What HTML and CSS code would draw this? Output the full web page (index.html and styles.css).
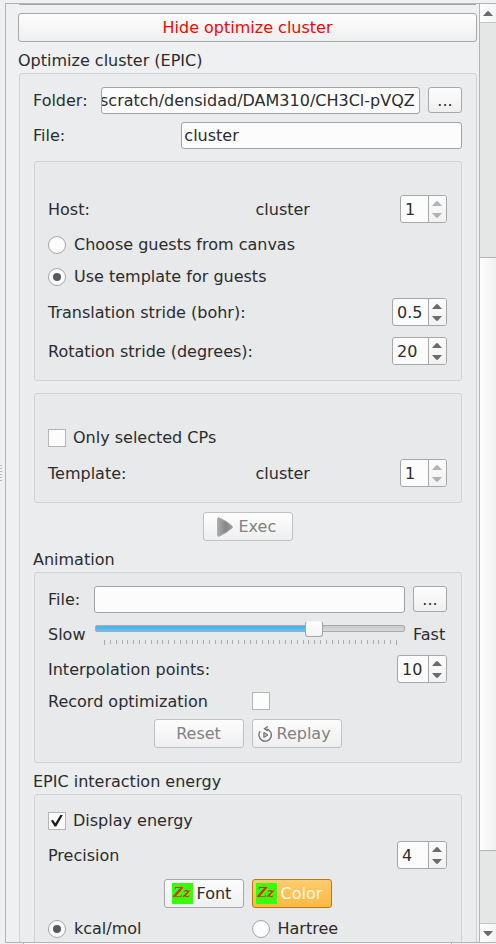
FILE: index.html
```html
<!DOCTYPE html>
<html lang="en">
<head>
<meta charset="utf-8">
<meta name="viewport" content="width=device-width, initial-scale=1">
<title>Optimize cluster</title>
<link rel="stylesheet" href="styles.css">
</head>
<body>
<svg class="defs" aria-hidden="true">
  <defs>
    <linearGradient id="play-fill" x1="0" y1="0" x2="1" y2="0">
      <stop offset="0" stop-color="#a9aba9"/>
      <stop offset="0.55" stop-color="#858785"/>
      <stop offset="1" stop-color="#9a9c9a"/>
    </linearGradient>
    <symbol id="up" viewBox="0 0 10 5"><path d="M0 5L4 .5Q5 -.3 6 .5L10 5Z" fill="currentColor"/></symbol>
    <symbol id="down" viewBox="0 0 10 5"><path d="M0 0L4 4.5Q5 5.3 6 4.5L10 0Z" fill="currentColor"/></symbol>
  </defs>
</svg>
<div class="window">
  <div class="splitter"></div>
  <div class="scroll-area">
    <main class="content">
      <div class="previous-edge"></div>
      <button class="button toggle" type="button">Hide optimize cluster</button>

      <h2 class="title">Optimize cluster (EPIC)</h2>
      <section class="group outer">
        <div class="folder-row">
          <label for="folder">Folder:</label>
          <input class="field scrolled" id="folder" type="text" value="scratch/densidad/DAM310/CH3Cl-pVQZ">
          <button class="button browse" type="button" aria-label="Browse folder">...</button>
        </div>
        <div class="name-row">
          <label for="name">File:</label>
          <input class="field" id="name" type="text" value="cluster">
        </div>

        <section class="group inner untitled">
          <div class="row pair">
            <label for="host">Host:</label>
            <div class="value"><span>cluster</span>
              <div class="spin disabled"><input class="one" id="host" type="text" value="1"><div class="steps"><button type="button" aria-label="Increase"><svg><use href="#up"/></svg></button><button type="button" aria-label="Decrease"><svg><use href="#down"/></svg></button></div></div>
            </div>
          </div>
          <label class="choice"><input type="radio" name="guests">Choose guests from canvas</label>
          <label class="choice"><input type="radio" name="guests" checked>Use template for guests</label>
          <div class="row">
            <label for="translation">Translation stride (bohr):</label>
            <div class="spin"><input class="three" id="translation" type="text" value="0.5"><div class="steps"><button type="button" aria-label="Increase"><svg><use href="#up"/></svg></button><button type="button" aria-label="Decrease"><svg><use href="#down"/></svg></button></div></div>
          </div>
          <div class="row">
            <label for="rotation">Rotation stride (degrees):</label>
            <div class="spin"><input class="three" id="rotation" type="text" value="20"><div class="steps"><button type="button" aria-label="Increase"><svg><use href="#up"/></svg></button><button type="button" aria-label="Decrease"><svg><use href="#down"/></svg></button></div></div>
          </div>
        </section>

        <section class="group inner untitled">
          <label class="choice"><input type="checkbox">Only selected CPs</label>
          <div class="row pair">
            <label for="template">Template:</label>
            <div class="value"><span>cluster</span>
              <div class="spin disabled"><input class="one" id="template" type="text" value="1"><div class="steps"><button type="button" aria-label="Increase"><svg><use href="#up"/></svg></button><button type="button" aria-label="Decrease"><svg><use href="#down"/></svg></button></div></div>
            </div>
          </div>
        </section>

        <button class="button wide exec" type="button" disabled>
          <svg class="play" viewBox="0 0 16 20"><path d="M.7 1.6Q.8 .5 2 .8Q10 4.2 15 9Q15.8 10 15 11Q10 15.800 2 19.2Q.8 19.500 .7 18.400Z" fill="url(#play-fill)" stroke="#a6a8a6"/></svg>
          Exec
        </button>

        <h3 class="title">Animation</h3>
        <section class="group inner animation">
          <div class="track-row">
            <label for="animation-file">File:</label>
            <input class="field" id="animation-file" type="text">
            <button class="button browse" type="button" aria-label="Browse file">...</button>
          </div>
          <div class="track-row slider-row">
            <label for="speed">Slow</label>
            <div class="slider">
              <input id="speed" type="range" min="0" max="50" value="36">
              <svg class="ticks" viewBox="0 0 293 5" preserveAspectRatio="none"><path d="M.5 0v5M6.5 0v4M12.5 0v4M18.5 0v4M23.5 0v4M29.5 0v4M35.5 0v4M41.5 0v4M47.5 0v4M53.5 0v4M58.5 0v4M64.5 0v4M70.5 0v4M76.5 0v4M82.5 0v4M88.5 0v4M93.5 0v4M99.5 0v4M105.5 0v4M111.5 0v4M117.5 0v4M123.5 0v4M128.5 0v4M134.5 0v4M140.5 0v4M146.5 0v4M152.5 0v4M158.5 0v4M164.5 0v4M169.5 0v4M175.5 0v4M181.5 0v4M187.5 0v4M193.5 0v4M199.5 0v4M204.5 0v4M210.5 0v4M216.5 0v4M222.5 0v4M228.5 0v4M234.5 0v4M239.5 0v4M245.5 0v4M251.5 0v4M257.5 0v4M263.5 0v4M269.5 0v4M274.5 0v4M280.5 0v4M286.5 0v4M292.5 0v5" stroke="#a9aaab"/></svg>
            </div>
            <span>Fast</span>
          </div>
          <div class="row">
            <label for="points">Interpolation points:</label>
            <div class="spin"><input class="two" id="points" type="text" value="10"><div class="steps"><button type="button" aria-label="Increase"><svg><use href="#up"/></svg></button><button type="button" aria-label="Decrease"><svg><use href="#down"/></svg></button></div></div>
          </div>
          <div class="row pair check-row">
            <label for="record">Record optimization</label>
            <input id="record" type="checkbox">
          </div>
          <div class="row pair buttons">
            <button class="button wide" type="button" disabled>Reset</button>
            <button class="button wide replay-button" type="button" disabled>
              <svg class="replay" viewBox="0 0 15 16"><path d="M2.200 5.200A6.200 6.200 0 1 0 8.500 2.900" fill="none" stroke="#6b6d6f" stroke-width="1.300"/><path d="M9.800 .5L6.500 2.800L9.800 5" fill="none" stroke="#6b6d6f" stroke-width="1.300"/><path d="M5.800 6.300L10 9L5.800 11.500Z" fill="#b5b7b8" stroke="#6b6d6f"/></svg>
              Replay
            </button>
          </div>
        </section>

        <h3 class="title">EPIC interaction energy</h3>
        <section class="group inner energy">
          <label class="choice"><input type="checkbox" checked>Display energy</label>
          <div class="row">
            <label for="precision">Precision</label>
            <div class="spin"><input class="two" id="precision" type="text" value="4"><div class="steps"><button type="button" aria-label="Increase"><svg><use href="#up"/></svg></button><button type="button" aria-label="Decrease"><svg><use href="#down"/></svg></button></div></div>
          </div>
          <div class="row pair buttons">
            <button class="button style" type="button"><span class="sample" aria-hidden="true">Zz</span>Font</button>
            <button class="button style active" type="button"><span class="sample" aria-hidden="true">Zz</span>Color</button>
          </div>
          <div class="row pair">
            <label class="choice"><input type="radio" name="unit" checked>kcal/mol</label>
            <label class="choice"><input type="radio" name="unit">Hartree</label>
          </div>
        </section>
      </section>
    </main>
    <div class="scrollbar">
      <button type="button" aria-label="Scroll up"><svg><use href="#up"/></svg></button>
      <div class="before"></div>
      <div class="thumb"></div>
      <div class="after"></div>
      <button type="button" aria-label="Scroll down"><svg><use href="#down"/></svg></button>
    </div>
  </div>
  <div class="next-pane"></div>
</div>
</body>
</html>
```

FILE: styles.css
```css
* { box-sizing: border-box; }

body {
  margin: 0;
  background: #eff0f1;
  color: #2a2c2e;
  font: 16px/19px "DejaVu Sans", sans-serif;
}

button, input { font: inherit; color: inherit; margin: 0; }
.defs { position: absolute; width: 0; height: 0; }

.window {
  display: grid;
  grid-template-columns: 5px minmax(0, 1fr);
  grid-template-rows: minmax(0, 1fr) 1px;
  height: 100vh;
  padding-top: 3px;
  overflow: hidden;
}

.splitter {
  align-self: center;
  justify-self: start;
  width: 2px;
  height: 16px;
  background: repeating-linear-gradient(#b9babb 0 1px, transparent 1px 3px);
}

.scroll-area {
  display: flex;
  min-height: 0;
  border: solid #b3b4b6;
  border-width: 1px 0 1px 1px;
}

.content {
  flex: 1;
  min-width: 0;
  overflow: hidden;
  padding: 0 2px 0 12px;
}

.next-pane {
  grid-column: 2;
  margin: 0 44px 0 18px;
  border: solid #b3b4b6;
  border-width: 0 1px;
  background: #f8f8f8;
}

.previous-edge { height: 1px; margin: 0 1px 8px; background: #a6a7a8; }

.title { margin: 9px 0 3px; font-size: 16px; font-weight: normal; }

.group {
  display: flex;
  flex-direction: column;
  margin-left: 1px;
  border: 1px solid #d0d2d3;
  border-radius: 3px;
}
.outer { padding: 13px 14px 13px 13px; background: #ebecee; }
.inner { padding: 13px 14px 14px 13px; background: #e8e9eb; }
.untitled { gap: 11px; margin-top: 12px; padding-top: 33px; padding-bottom: 15px; }
.animation { gap: 8px; }
.energy { gap: 10px; padding-top: 15px; }

.button {
  display: flex;
  align-items: center;
  justify-content: center;
  height: 29px;
  padding: 0;
  border: 1px solid #a6a7a8;
  border-radius: 3px;
  background: linear-gradient(#fdfdfd, #efefef);
}
.button:disabled { border-color: #c0c1c2; color: #808284; }
.toggle { width: 100%; color: #ff0000; }
.browse { width: 34px; height: 26px; }
.wide { width: 90px; gap: 6px; }
.exec { align-self: center; justify-content: flex-start; margin-top: 9px; padding-left: 13px; }
.play { width: 16px; height: 20px; }
.replay-button { justify-content: flex-start; gap: 4px; padding-left: 5px; }
.replay { width: 15px; height: 16px; }
.style { justify-content: flex-start; width: 80px; gap: 4px; padding-left: 7px; }
.active {
  padding-left: 3px;
  border-color: #b57a10;
  background: linear-gradient(#ffcc6e, #fbb941);
  color: #fff8e8;
}
.sample {
  width: 21px;
  height: 21px;
  background: #35ff0d;
  color: #e8281c;
  font: italic bold 13px/20px "DejaVu Serif", serif;
  text-align: center;
}

.field {
  width: 100%;
  min-width: 0;
  height: 27px;
  padding: 0 3px 0 2px;
  border: 1px solid #a2a3a4;
  border-radius: 3px;
  background: #fcfcfc;
}
.scrolled { padding: 0; text-indent: -2px; }

.folder-row, .name-row, .track-row { display: grid; column-gap: 8px; }
.folder-row { grid-template-columns: 60px minmax(0, 1fr) 34px; margin-bottom: 8px; }
.name-row { grid-template-columns: 1fr 2fr; }
.track-row { grid-template-columns: 38px minmax(0, 1fr) 34px; }
.folder-row label, .name-row label, .track-row label, .track-row span { align-self: center; }

.row { display: flex; align-items: center; justify-content: space-between; }
.pair { display: grid; grid-template-columns: 1fr 1fr; column-gap: 8px; }
.value { display: flex; align-items: center; justify-content: space-between; padding-left: 4px; }
.check-row { min-height: 20px; }
.buttons > :first-child { justify-self: end; }

.choice { display: flex; align-items: center; gap: 8px; height: 21px; }
.choice:has([type="checkbox"]) { gap: 7px; }

input[type="checkbox"], input[type="radio"] {
  appearance: none;
  display: grid;
  place-items: center;
  flex: none;
  width: 18px;
  height: 18px;
  border: 1px solid #b4b5b6;
  background: #fcfcfc;
}
input[type="radio"] { border-color: #a4a5a6; border-radius: 50%; }
input[type="radio"]:checked::before {
  content: "";
  width: 8px;
  height: 8px;
  border-radius: 50%;
  background: #58595b;
}
input[type="checkbox"]:checked::before {
  content: "";
  width: 12px;
  height: 12px;
  background: #1c1d1e;
  clip-path: polygon(0 52%, 16% 44%, 36% 72%, 80% 0, 100% 2%, 44% 100%, 30% 100%);
}

.spin {
  display: flex;
  height: 28px;
  border: 1px solid #a6a7a8;
  border-radius: 3px;
  background: #fcfcfc;
  overflow: hidden;
}
.spin input {
  padding: 0 0 0 4px;
  border: 0;
  background: transparent;
}
.one { width: 27px; }
.two { width: 30px; }
.three { width: 35px; }
.steps {
  display: flex;
  flex-direction: column;
  width: 18px;
  border-left: 1px solid #a6a7a8;
  background: linear-gradient(#fcfcfc, #f1f1f1);
  color: #6a6b6c;
}
.disabled .steps { color: #b1b2b3; }
.steps button {
  display: flex;
  flex: 1;
  justify-content: center;
  padding: 0 2px 0 0;
  border: 0;
  background: none;
}
.steps button:first-child { align-items: flex-end; padding-bottom: 3px; }
.steps button:last-child { align-items: flex-start; padding-top: 4px; }
.steps svg, .scrollbar svg { width: 10px; height: 5px; }

.slider-row { height: 26px; }
.slider { display: flex; flex-direction: column; gap: 4px; padding-left: 1px; }
input[type="range"] {
  appearance: none;
  display: block;
  width: 100%;
  height: 15px;
  background: none;
}
input[type="range"]::-webkit-slider-runnable-track {
  height: 7px;
  border: 1px solid #a9aaab;
  border-radius: 2px;
  background:
    linear-gradient(#2b74a4 0 1px, #4fb4ee 1px 3px, #62c2fa 6px, #2b74a4 6px) border-box 0 0 / 72% 100% no-repeat,
    linear-gradient(#c9cacb, #d8d9da);
}
input[type="range"]::-webkit-slider-thumb {
  appearance: none;
  width: 18px;
  height: 16px;
  margin-top: -5px;
  border: 1px solid #a3a4a5;
  border-top-color: #f4f4f4;
  border-radius: 3px;
  background: linear-gradient(#fdfdfd, #f5f5f5);
}
.ticks {
  width: calc(100% - 17px);
  height: 5px;
  margin-left: 9px;
  shape-rendering: crispEdges;
}

.scrollbar {
  display: flex;
  flex-direction: column;
  width: 17px;
  border-left: 1px solid #b3b4b6;
  background: #e5e6e6;
}
.scrollbar button {
  display: grid;
  place-items: center;
  height: 18px;
  padding: 0;
  border: 0;
  background: linear-gradient(90deg, #fdfdfd, #f4f4f4);
  color: #6a6b6c;
}
.before { flex: 235; border-top: 1px solid #c4c5c6; }
.thumb { flex: 596; border: solid #b3b4b6; border-width: 1px 0; background: linear-gradient(90deg, #fefefe, #f0f0f0); }
.after { flex: 72; border-bottom: 1px solid #c4c5c6; }
```
